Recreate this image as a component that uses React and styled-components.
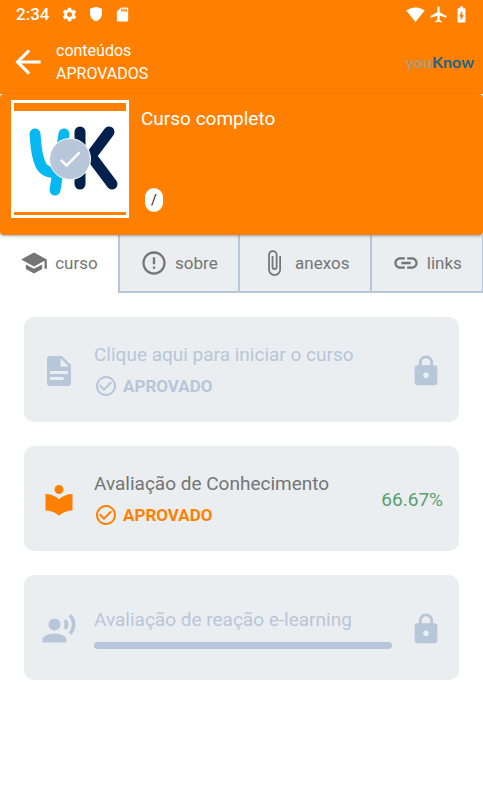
import React from 'react';
import styled, { createGlobalStyle } from 'styled-components';
import {
  MdSettings, MdSdCard, MdSignalWifi4Bar, MdAirplanemodeActive,
  MdBatteryChargingFull, MdArrowBack, MdSchool, MdErrorOutline, MdAttachFile,
  MdLink, MdLocalLibrary, MdRecordVoiceOver, MdCheckCircleOutline, MdCheck,
} from 'react-icons/md';

const orange = '#ff8000';
const mist = '#b8c6d9';
const panel = '#eaeef1';
const grey = '#757575';

const GlobalStyle = createGlobalStyle`
  *, *::before, *::after { box-sizing: border-box; }
  body {
    margin: 0;
    background: #fff;
    font-family: Roboto, "Liberation Sans", sans-serif;
  }
  svg { display: block; flex: none; }
`;

const StatusBar = styled.div`
  display: flex;
  align-items: center;
  justify-content: space-between;
  height: 28px;
  padding: 0 12px 0 16px;
  background: ${orange};
  color: #fff;
`;

const StatusGroup = styled.div`
  display: flex;
  align-items: center;
  gap: ${(p) => p.$gap}px;
`;

const Clock = styled.span`
  font-size: 17px;
  line-height: 28px;
  font-weight: 500;
  margin-right: 2px;
`;

const AppBar = styled.header`
  display: flex;
  align-items: center;
  height: 66px;
  padding: 2px 9px 0;
  background: ${orange};
  color: #fff;
`;

const BackButton = styled.button`
  display: flex;
  padding: 0;
  border: 0;
  background: none;
  color: inherit;
  cursor: pointer;
`;

const Titles = styled.h1`
  flex: 1;
  margin: 0 0 0 9px;
  font-size: 16px;
  line-height: 23px;
  font-weight: 400;
`;

const TitleLine = styled.span`
  display: block;
`;

const Brand = styled.span`
  font-family: Lato, sans-serif;
  font-size: 16px;
  line-height: 20px;
  font-weight: 700;
  color: #a99a82;
`;

const BrandStrong = styled.span`
  color: #17688a;
`;

const Hero = styled.section`
  position: relative;
  display: flex;
  gap: 12px;
  height: 141px;
  padding: 6px 11px;
  border-radius: 4px;
  background: ${orange};
  color: #fff;
  box-shadow: 0 1px 3px rgba(40, 60, 90, 0.45);
`;

const Cover = styled.div`
  position: relative;
  display: grid;
  flex: none;
  width: 118px;
  height: 118px;
  border: 2px solid #fff;
  background: #fff;
`;

const CoverBadge = styled.span`
  position: absolute;
  top: 50%;
  left: 50%;
  display: grid;
  place-items: center;
  width: 42px;
  height: 42px;
  transform: translate(-50%, -50%);
  border: 1px solid #fff;
  border-radius: 50%;
  background: ${mist};
`;

const HeroText = styled.div`
  display: flex;
  flex-direction: column;
  align-items: flex-start;
  justify-content: space-between;
  padding: 8px 0 17px;
`;

const CourseName = styled.h2`
  margin: 0;
  font-size: 19px;
  line-height: 22px;
  font-weight: 400;
`;

const Pill = styled.span`
  width: 18px;
  margin-left: 4px;
  border-radius: 9px;
  background: #fff;
  color: #222;
  font-size: 14px;
  line-height: 24px;
  text-align: center;
`;

const Tabs = styled.nav`
  display: flex;
`;

const Tab = styled.button`
  display: flex;
  flex: 1 1 auto;
  align-items: center;
  justify-content: center;
  gap: 7px;
  height: 58px;
  padding: 0 20px;
  border: 0 solid ${(p) => (p.$active ? 'transparent' : mist)};
  border-width: ${(p) => (p.$active ? '0 0 2px' : '0 0 2px 2px')};
  background: ${(p) => (p.$active ? '#fff' : panel)};
  color: ${grey};
  font: inherit;
  font-size: 17px;
  cursor: pointer;
  &:last-child { border-right-width: 1px; }
`;

const Lessons = styled.main`
  display: flex;
  flex-direction: column;
  gap: 24px;
  padding: 24px;
`;

const Lesson = styled.article`
  display: grid;
  grid-template-columns: 36px 1fr auto;
  align-items: center;
  column-gap: 17px;
  min-height: 105px;
  padding: 2px 16px 0 17px;
  border-radius: 10px;
  background: ${panel};
  color: ${(p) => (p.$locked ? mist : orange)};
`;

const LessonBody = styled.div`
  display: flex;
  flex-direction: column;
  gap: 8px;
`;

const LessonTitle = styled.h3`
  margin: 0;
  font-size: 19px;
  line-height: 22px;
  font-weight: 400;
  color: ${(p) => (p.$locked ? mist : grey)};
`;

const State = styled.p`
  display: flex;
  align-items: center;
  gap: 5px;
  margin: 0;
  font-size: 17px;
  line-height: 24px;
  font-weight: 700;
`;

const Progress = styled.div`
  height: 7px;
  margin-top: 3px;
  border-radius: 4px;
  background: ${mist};
`;

const Score = styled.span`
  font-size: 19px;
  color: #5a9f6e;
`;

const ShieldIcon = () => (
  <svg width="16" height="16" viewBox="0 0 24 24" fill="currentColor" aria-hidden="true">
    <path d="M12 1 3 4v7c0 5.6 3.8 10.7 9 12 5.2-1.3 9-6.4 9-12V4z" />
  </svg>
);

const DocumentIcon = () => (
  <svg width="36" height="36" viewBox="0 0 24 24" fill="currentColor" aria-hidden="true">
    <path d="M13 9h5.5L13 3.5V9M6 2h8l6 6v12a2 2 0 0 1-2 2H6a2 2 0 0 1-2-2V4c0-1.11.89-2 2-2m9 16v-2H6v2h9m3-4v-2H6v2h12z" />
  </svg>
);

const LockIcon = () => (
  <svg width="34" height="34" viewBox="0 0 24 24" fill="currentColor" aria-hidden="true">
    <path d="M12 17a2 2 0 1 0 0-4 2 2 0 0 0 0 4m6-9a2 2 0 0 1 2 2v10a2 2 0 0 1-2 2H6a2 2 0 0 1-2-2V10c0-1.11.9-2 2-2h1V6a5 5 0 0 1 10 0v2h1m-6-5a3 3 0 0 0-3 3v2h6V6a3 3 0 0 0-3-3z" />
  </svg>
);

const CoverArt = () => (
  <svg width="114" height="114" viewBox="0 0 114 114" fill="none" strokeLinecap="round" strokeLinejoin="round" aria-hidden="true">
    <path d="M1 1h112v8H1zM1 110h112v3H1z" fill={orange} />
    <g stroke="#06b8f2" strokeWidth="11">
      <path d="M22 32c1 11 1 20 5 29 3 9 12 11 20 8" />
      <path d="M51 32 42 88" />
    </g>
    <g stroke="#02204c" strokeWidth="11">
      <path d="M67 30v52" />
      <path d="M96 30 78 54 99 82" />
    </g>
  </svg>
);

const tabs = [
  { label: 'curso', Icon: MdSchool, active: true },
  { label: 'sobre', Icon: MdErrorOutline },
  { label: 'anexos', Icon: MdAttachFile },
  { label: 'links', Icon: MdLink },
];

const Approved = () => (
  <State><MdCheckCircleOutline size={24} />APROVADO</State>
);

export default function App() {
  return (
    <>
      <GlobalStyle />
      <StatusBar>
        <StatusGroup $gap={10}>
          <Clock>2:34</Clock>
          <MdSettings size={17} />
          <ShieldIcon />
          <MdSdCard size={17} />
        </StatusGroup>
        <StatusGroup $gap={4}>
          <MdSignalWifi4Bar size={19} />
          <MdAirplanemodeActive size={19} />
          <MdBatteryChargingFull size={19} />
        </StatusGroup>
      </StatusBar>
      <AppBar>
        <BackButton aria-label="Voltar"><MdArrowBack size={38} /></BackButton>
        <Titles>
          <TitleLine>conteúdos</TitleLine>
          <TitleLine>APROVADOS</TitleLine>
        </Titles>
        <Brand>you<BrandStrong>Know</BrandStrong></Brand>
      </AppBar>
      <Hero>
        <Cover>
          <CoverArt />
          <CoverBadge><MdCheck size={28} /></CoverBadge>
        </Cover>
        <HeroText>
          <CourseName>Curso completo</CourseName>
          <Pill>/</Pill>
        </HeroText>
      </Hero>
      <Tabs>
        {tabs.map(({ label, Icon, active }) => (
          <Tab key={label} $active={active}><Icon size={28} />{label}</Tab>
        ))}
      </Tabs>
      <Lessons>
        <Lesson $locked>
          <DocumentIcon />
          <LessonBody>
            <LessonTitle $locked>Clique aqui para iniciar o curso</LessonTitle>
            <Approved />
          </LessonBody>
          <LockIcon />
        </Lesson>
        <Lesson>
          <MdLocalLibrary size={36} />
          <LessonBody>
            <LessonTitle>Avaliação de Conhecimento</LessonTitle>
            <Approved />
          </LessonBody>
          <Score>66.67%</Score>
        </Lesson>
        <Lesson $locked>
          <MdRecordVoiceOver size={36} />
          <LessonBody>
            <LessonTitle $locked>Avaliação de reação e-learning</LessonTitle>
            <Progress />
          </LessonBody>
          <LockIcon />
        </Lesson>
      </Lessons>
    </>
  );
}
